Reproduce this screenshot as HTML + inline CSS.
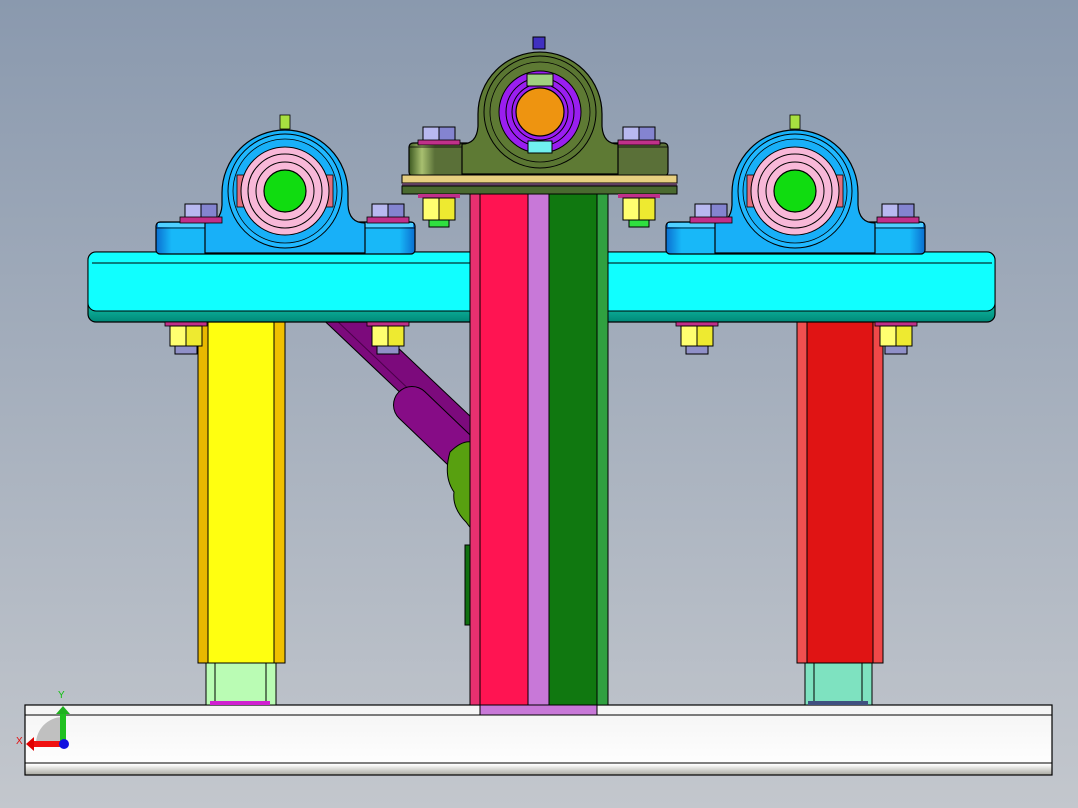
<!DOCTYPE html>
<html><head><meta charset="utf-8"><style>html,body{margin:0;padding:0;overflow:hidden}svg{display:block}</style></head>
<body>
<svg width="1078" height="808" viewBox="0 0 1078 808" xmlns="http://www.w3.org/2000/svg">
<defs>
<linearGradient id="bg" x1="0" y1="0" x2="0" y2="1"><stop offset="0" stop-color="#8a99ae"/><stop offset="1" stop-color="#c3c7cd"/></linearGradient>
<linearGradient id="teal" x1="0" y1="0" x2="0" y2="1"><stop offset="0" stop-color="#00c8b0"/><stop offset="0.5" stop-color="#20f0d0"/><stop offset="1" stop-color="#008878"/></linearGradient>
<linearGradient id="blueb" x1="0" y1="0" x2="1" y2="0"><stop offset="0" stop-color="#0a6ed0"/><stop offset="0.06" stop-color="#18b8f8"/><stop offset="0.94" stop-color="#18b8f8"/><stop offset="1" stop-color="#0a6ed0"/></linearGradient>
<linearGradient id="olive" x1="0" y1="0" x2="1" y2="0"><stop offset="0" stop-color="#3c5820"/><stop offset="0.05" stop-color="#a8c070"/><stop offset="0.1" stop-color="#5a7038"/><stop offset="1" stop-color="#5a7038"/></linearGradient>
<linearGradient id="plate" x1="0" y1="0" x2="0" y2="1"><stop offset="0" stop-color="#f4f4f4"/><stop offset="0.85" stop-color="#fefefe"/><stop offset="1" stop-color="#a8a8a0"/></linearGradient>
<g id="bolttop">
<rect x="-16" y="0" width="32" height="14" fill="#b8b8f0" stroke="#000" stroke-width="1"/>
<rect x="0" y="0" width="16" height="14" fill="#8484d0" stroke="#000" stroke-width="1"/>
<rect x="-21" y="13" width="42" height="5" fill="#c0308a" stroke="#000" stroke-width="0.8"/>
</g>
<g id="nutbot">
<rect x="-21" y="0" width="42" height="4" fill="#c0308a" stroke="#000" stroke-width="0.8"/>
<rect x="-16" y="4" width="32" height="20" fill="#ffff70" stroke="#000" stroke-width="1"/>
<rect x="0" y="4" width="16" height="20" fill="#eeea30" stroke="#000" stroke-width="1"/>
<rect x="-11" y="24" width="22" height="8" fill="#9090c8" stroke="#000" stroke-width="1"/>
</g>
<g id="bearing">
<rect x="-129" y="31" width="259" height="32" rx="4" fill="url(#blueb)" stroke="#000" stroke-width="1.2"/>
<rect x="-127" y="32" width="255" height="4" fill="#50d0ff"/>
<line x1="-129" y1="37" x2="130" y2="37" stroke="#000" stroke-width="0.8"/>
<line x1="-47" y1="37" x2="-47" y2="63" stroke="#000"/>
<line x1="47" y1="37" x2="47" y2="63" stroke="#000"/>
<path d="M-80,32 Q-64,32 -63,14 L-63,2 A63,63 0 0 1 63,2 L63,14 Q64,32 80,32 L80,62 L-80,62 Z" fill="#18b0f8" stroke="#000" stroke-width="1.2"/>
<circle r="57" fill="#20b8ff" stroke="#000" stroke-width="1"/>
<circle r="52" fill="#18b0f8" stroke="#000" stroke-width="0.8"/>
<rect x="-48" y="-16" width="96" height="32" fill="#e07080" stroke="#000" stroke-width="0.8"/>
<circle r="44" fill="#f8b8d8" stroke="#000" stroke-width="1"/>
<circle r="37" fill="none" stroke="#000" stroke-width="1"/>
<circle r="29" fill="#f8b8d8" stroke="#000" stroke-width="1"/>
<circle r="21" fill="#10dc10" stroke="#000" stroke-width="1.2"/>
<rect x="-5" y="-76" width="10" height="14" fill="#a8e040" stroke="#000" stroke-width="0.8"/>
<rect x="-100" y="13" width="32" height="14" fill="#b8b8f0" stroke="#000"/>
<rect x="-84" y="13" width="16" height="14" fill="#8484d0" stroke="#000"/>
<rect x="-105" y="26" width="42" height="6" fill="#c0308a" stroke="#000" stroke-width="0.8"/>
<rect x="87" y="13" width="32" height="14" fill="#b8b8f0" stroke="#000"/>
<rect x="103" y="13" width="16" height="14" fill="#8484d0" stroke="#000"/>
<rect x="82" y="26" width="42" height="6" fill="#c0308a" stroke="#000" stroke-width="0.8"/>
</g>
</defs>
<rect width="1078" height="808" fill="url(#bg)"/>

<!-- diagonal strut -->
<line x1="325" y1="300" x2="478" y2="445" stroke="#000" stroke-width="32"/>
<line x1="325" y1="300" x2="478" y2="445" stroke="#7c0a7c" stroke-width="30"/>
<line x1="315" y1="300" x2="478" y2="455" stroke="#4a004a" stroke-width="1"/>
<line x1="412" y1="405" x2="480" y2="470" stroke="#000" stroke-width="38" stroke-linecap="round"/>
<line x1="412" y1="405" x2="480" y2="470" stroke="#860c86" stroke-width="36" stroke-linecap="round"/>
<path d="M450,452 Q462,440 472,442 L472,530 L466,522 Q452,508 454,492 Q443,476 450,452 Z" fill="#58a010" stroke="#000" stroke-width="1"/>
<rect x="465" y="545" width="6" height="80" fill="#107010" stroke="#000" stroke-width="1"/>

<!-- base plate -->
<rect x="25" y="705" width="1027" height="70" fill="url(#plate)" stroke="#000" stroke-width="1.2"/>
<line x1="25" y1="715" x2="1052" y2="715" stroke="#000" stroke-width="1"/>
<line x1="25" y1="763" x2="1052" y2="763" stroke="#000" stroke-width="1"/>

<!-- lower column feet -->
<rect x="206" y="663" width="70" height="42" fill="#bafcb4" stroke="#000"/>
<line x1="215" y1="663" x2="215" y2="705" stroke="#000"/><line x1="266" y1="663" x2="266" y2="705" stroke="#000"/>
<rect x="210" y="701" width="60" height="4" fill="#d020d0"/>
<rect x="805" y="663" width="67" height="42" fill="#7ee2c0" stroke="#000"/>
<line x1="814" y1="663" x2="814" y2="705" stroke="#000"/><line x1="862" y1="663" x2="862" y2="705" stroke="#000"/>
<rect x="808" y="701" width="60" height="4" fill="#405080"/>

<!-- yellow column -->
<rect x="198" y="318" width="87" height="345" fill="#ffff10" stroke="#000"/>
<rect x="198" y="318" width="10" height="345" fill="#e8b800" stroke="#000"/>
<rect x="274" y="318" width="11" height="345" fill="#f0c000" stroke="#000"/>
<!-- red column -->
<rect x="797" y="318" width="86" height="345" fill="#e01414" stroke="#000"/>
<rect x="797" y="318" width="10" height="345" fill="#f05050" stroke="#000"/>
<rect x="873" y="318" width="10" height="345" fill="#f04848" stroke="#000"/>

<!-- beam -->
<rect x="88" y="252" width="907" height="70" rx="8" fill="url(#teal)" stroke="#000" stroke-width="1.2"/>
<rect x="88" y="252" width="907" height="59" rx="8" fill="#10ffff" stroke="#000" stroke-width="1"/>
<line x1="92" y1="263" x2="992" y2="263" stroke="#000" stroke-width="1"/>

<!-- nuts under beam -->
<use href="#nutbot" x="186" y="322"/><use href="#nutbot" x="388" y="322"/>
<use href="#nutbot" x="697" y="322"/><use href="#nutbot" x="896" y="322"/>

<!-- side bearings -->
<use href="#bearing" x="285" y="191"/>
<use href="#bearing" x="795" y="191"/>

<!-- center column -->
<rect x="470" y="190" width="138" height="515" fill="#c878d8" stroke="#000"/>
<rect x="470" y="190" width="10" height="515" fill="#e83070" stroke="#000"/>
<rect x="480" y="190" width="48" height="515" fill="#ff1452" stroke="#000"/>
<rect x="549" y="190" width="48" height="515" fill="#107810" stroke="#000"/>
<rect x="597" y="190" width="11" height="515" fill="#30a040" stroke="#000"/>
<rect x="480" y="705" width="117" height="10" fill="#c878d8" stroke="#000"/>

<!-- center bearing -->
<rect x="409" y="143" width="259" height="33" rx="4" fill="url(#olive)" stroke="#000" stroke-width="1.2"/>
<line x1="409" y1="147" x2="668" y2="147" stroke="#000" stroke-width="0.8"/>
<line x1="492" y1="147" x2="492" y2="176" stroke="#000"/><line x1="586" y1="147" x2="586" y2="176" stroke="#000"/>
<path d="M462,144 Q477,144 478,126 L478,114 A62,62 0 0 1 602,114 L602,126 Q603,144 618,144 L618,174 L462,174 Z" fill="#5e7a34" stroke="#000" stroke-width="1.2"/>
<circle cx="540" cy="112" r="56" fill="#5a7632" stroke="#000"/>
<circle cx="540" cy="112" r="50" fill="#5e7a34" stroke="#000" stroke-width="0.8"/>
<circle cx="540" cy="112" r="41" fill="#9a1ef0" stroke="#000"/>
<circle cx="540" cy="112" r="34" fill="none" stroke="#000"/>
<circle cx="540" cy="112" r="28" fill="#9a1ef0" stroke="#000"/>
<circle cx="540" cy="112" r="24" fill="#ee9410" stroke="#000" stroke-width="1.2"/>
<rect x="527" y="74" width="26" height="12" fill="#a0d080" stroke="#000"/>
<rect x="528" y="141" width="24" height="12" fill="#70f0f0" stroke="#000"/>
<rect x="533" y="37" width="12" height="12" fill="#4030c0" stroke="#000"/>
<use href="#bolttop" x="439" y="127"/><use href="#bolttop" x="639" y="127"/>
<rect x="402" y="175" width="275" height="8" fill="#e8d080" stroke="#000"/>
<rect x="402" y="183" width="275" height="3" fill="#604060"/>
<rect x="402" y="186" width="275" height="8" fill="#4a6a30" stroke="#000"/>
<rect x="418" y="194" width="42" height="4" fill="#c0308a"/>
<rect x="423" y="198" width="32" height="22" fill="#ffff70" stroke="#000"/><rect x="439" y="198" width="16" height="22" fill="#eeea30" stroke="#000"/>
<rect x="429" y="220" width="20" height="7" fill="#30e040" stroke="#000"/>
<rect x="618" y="194" width="42" height="4" fill="#c0308a"/>
<rect x="623" y="198" width="32" height="22" fill="#ffff70" stroke="#000"/><rect x="639" y="198" width="16" height="22" fill="#eeea30" stroke="#000"/>
<rect x="629" y="220" width="20" height="7" fill="#30e040" stroke="#000"/>

<!-- axis triad -->
<path d="M62,717 A27,27 0 0 0 36,744 L62,744 Z" fill="#c0c0c0"/>
<rect x="60" y="712" width="6" height="32" fill="#20c020"/>
<path d="M56,714 L63,706 L70,714 Z" fill="#20b020"/>
<rect x="32" y="741" width="30" height="6" fill="#f01010"/>
<path d="M34,737 L26,744 L34,751 Z" fill="#e00000"/>
<circle cx="64" cy="744" r="5" fill="#1010e0"/>
<text x="58" y="698" font-family="Liberation Sans, sans-serif" font-size="10" fill="#10c010">Y</text>
<text x="16" y="744" font-family="Liberation Sans, sans-serif" font-size="10" fill="#e01010">X</text>
</svg>
</body></html>
